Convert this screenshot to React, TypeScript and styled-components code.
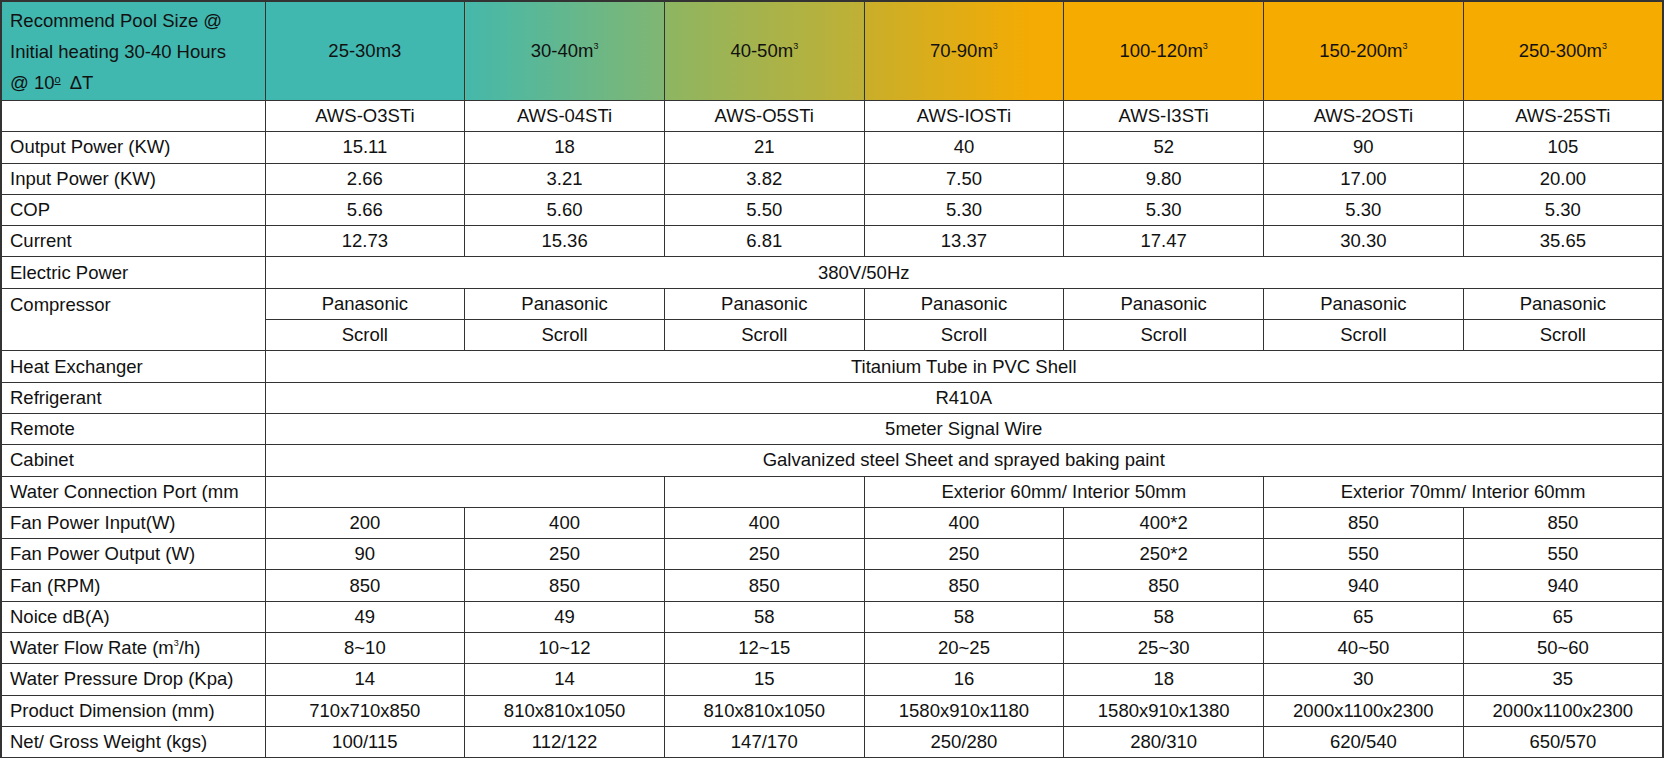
import React from "react";
import styled, { createGlobalStyle } from "styled-components";

const Global = createGlobalStyle`
  html, body { margin: 0; padding: 0; background: #fff; }
  body { font-family: "Liberation Sans", Arial, sans-serif; }
`;

const Table = styled.table`
  width: 1664px;
  height: 758px;
  border-collapse: collapse;
  table-layout: fixed;
  font-size: 18.5px;
  color: #111;
  border: 2px solid #333;
`;

const Head = styled.th<{ $bg: string }>`
  height: 98px;
  background: ${(p) => p.$bg};
  border: 1.5px solid #333;
  font-weight: normal;
  text-align: center;
  padding: 0;
`;

const HeadLabel = styled(Head)`
  text-align: left;
  padding: 0 8px;
  line-height: 31px;
`;

const Row = styled.tr`
  height: 31.3px;
`;

const Label = styled.td<{ $top?: boolean }>`
  border: 1.5px solid #333;
  padding: 0 8px;
  text-align: left;
  vertical-align: ${(p) => (p.$top ? "top" : "middle")};
  padding-top: ${(p) => (p.$top ? "5px" : "0")};
  white-space: nowrap;
  overflow: hidden;
`;

const Cell = styled.td<{ $shift?: number }>`
  border: 1.5px solid #333;
  text-align: center;
  padding: 0 ${(p) => p.$shift ?? 0}px 0 0;
  white-space: nowrap;
`;

const Sup = styled.sup`
  font-size: 9px;
  vertical-align: 8px;
  line-height: 0;
`;

const Deg = styled.sup`
  font-size: 11px;
  vertical-align: 6px;
  line-height: 0;
  text-decoration: underline;
  margin-right: 4px;
`;

const m3 = (t: string) => (
  <>
    {t}m<Sup>3</Sup>
  </>
);

const heads: { t: React.ReactNode; bg: string }[] = [
  { t: "25-30m3", bg: "#40b8b0" },
  { t: m3("30-40"), bg: "linear-gradient(to right,#45b8aa,#80b672)" },
  { t: m3("40-50"), bg: "linear-gradient(to right,#8db562,#c0b034)" },
  { t: m3("70-90"), bg: "linear-gradient(to right,#c9ae2a,#f4ab03 85%,#f5ab00)" },
  { t: m3("100-120"), bg: "#f5ab00" },
  { t: m3("150-200"), bg: "#f5ab00" },
  { t: m3("250-300"), bg: "#f5ab00" },
];

type R = { label: React.ReactNode; vals: string[] };
const top: R[] = [
  { label: "", vals: ["AWS-O3STi", "AWS-04STi", "AWS-O5STi", "AWS-IOSTi", "AWS-I3STi", "AWS-2OSTi", "AWS-25STi"] },
  { label: "Output Power (KW)", vals: ["15.11", "18", "21", "40", "52", "90", "105"] },
  { label: "Input Power (KW)", vals: ["2.66", "3.21", "3.82", "7.50", "9.80", "17.00", "20.00"] },
  { label: "COP", vals: ["5.66", "5.60", "5.50", "5.30", "5.30", "5.30", "5.30"] },
  { label: "Current", vals: ["12.73", "15.36", "6.81", "13.37", "17.47", "30.30", "35.65"] },
];
const bottom: R[] = [
  { label: "Fan Power Input(W)", vals: ["200", "400", "400", "400", "400*2", "850", "850"] },
  { label: "Fan Power Output (W)", vals: ["90", "250", "250", "250", "250*2", "550", "550"] },
  { label: "Fan (RPM)", vals: ["850", "850", "850", "850", "850", "940", "940"] },
  { label: "Noice dB(A)", vals: ["49", "49", "58", "58", "58", "65", "65"] },
  { label: <>Water Flow Rate (m<Sup>3</Sup>/h)</>, vals: ["8~10", "10~12", "12~15", "20~25", "25~30", "40~50", "50~60"] },
  { label: "Water Pressure Drop (Kpa)", vals: ["14", "14", "15", "16", "18", "30", "35"] },
  { label: "Product Dimension (mm)", vals: ["710x710x850", "810x810x1050", "810x810x1050", "1580x910x1180", "1580x910x1380", "2000x1100x2300", "2000x1100x2300"] },
  { label: "Net/ Gross Weight (kgs)", vals: ["100/115", "112/122", "147/170", "250/280", "280/310", "620/540", "650/570"] },
];

const Rows = ({ rows }: { rows: R[] }) => (
  <>
    {rows.map((r, i) => (
      <Row key={i}>
        <Label>{r.label}</Label>
        {r.vals.map((v, j) => (
          <Cell key={j}>{v}</Cell>
        ))}
      </Row>
    ))}
  </>
);

const spans: [string, string][] = [
  ["Heat Exchanger", "Titanium Tube in PVC Shell"],
  ["Refrigerant", "R410A"],
  ["Remote", "5meter Signal Wire"],
  ["Cabinet", "Galvanized steel Sheet and sprayed baking paint"],
];

export default function App() {
  return (
    <>
      <Global />
      <Table>
        <colgroup>
          <col style={{ width: 264 }} />
          {heads.map((_, i) => (
            <col key={i} />
          ))}
        </colgroup>
        <tbody>
          <tr>
            <HeadLabel $bg="#40b8b0">
              Recommend Pool Size @<br />
              Initial heating 30-40 Hours<br />@ 10<Deg>o</Deg> ΔT
            </HeadLabel>
            {heads.map((h, i) => (
              <Head key={i} $bg={h.bg}>
                {h.t}
              </Head>
            ))}
          </tr>
          <Rows rows={top} />
          <Row>
            <Label>Electric Power</Label>
            <Cell colSpan={7} $shift={200}>380V/50Hz</Cell>
          </Row>
          <Row>
            <Label rowSpan={2} $top>Compressor</Label>
            {heads.map((_, i) => (
              <Cell key={i}>Panasonic</Cell>
            ))}
          </Row>
          <Row>
            {heads.map((_, i) => (
              <Cell key={i}>Scroll</Cell>
            ))}
          </Row>
          {spans.map(([l, v]) => (
            <Row key={l}>
              <Label>{l}</Label>
              <Cell colSpan={7}>{v}</Cell>
            </Row>
          ))}
          <Row>
            <Label>Water Connection Port (mm</Label>
            <Cell colSpan={2} />
            <Cell />
            <Cell colSpan={2}>Exterior 60mm/ Interior 50mm</Cell>
            <Cell colSpan={2}>Exterior 70mm/ Interior 60mm</Cell>
          </Row>
          <Rows rows={bottom} />
        </tbody>
      </Table>
    </>
  );
}
